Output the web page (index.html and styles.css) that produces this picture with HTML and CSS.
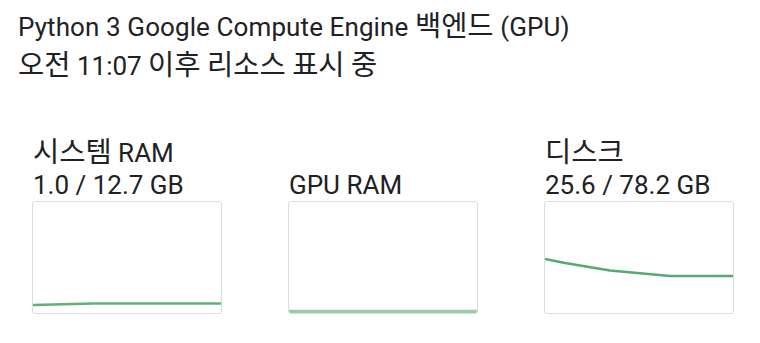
FILE: index.html
```html
<!DOCTYPE html>
<html lang="ko">
<head>
<meta charset="utf-8">
<link rel="stylesheet" href="styles.css">
</head>
<body>
<div class="page">
  <div class="header">
    <div class="title">Python 3 Google Compute Engine <span class="ko">백엔드</span> (GPU)</div>
    <div class="subtitle"><span class="ko">오전</span> 11:07 <span class="ko">이후</span> <span class="ko">리소스</span> <span class="ko">표시</span> <span class="ko">중</span></div>
  </div>
  <div class="cards">
    <div class="card">
      <div class="label"><span class="ko">시스템</span> RAM</div>
      <div class="label">1.0 / 12.7 GB</div>
      <div class="chart">
        <svg width="188" height="111" viewBox="0 0 188 111">
          <polyline points="0,103 60,101.5 188,101.5" fill="none" stroke="#1e8e3e" stroke-opacity="0.7" stroke-width="2.5"/>
        </svg>
      </div>
    </div>
    <div class="card">
      <div class="label">GPU RAM</div>
      <div class="chart">
        <svg width="188" height="111" viewBox="0 0 188 111">
          <polyline points="0,109.5 188,109.5" fill="none" stroke="#1e8e3e" stroke-opacity="0.45" stroke-width="3.5"/>
        </svg>
      </div>
    </div>
    <div class="card">
      <div class="label"><span class="ko">디스크</span></div>
      <div class="label">25.6 / 78.2 GB</div>
      <div class="chart">
        <svg width="188" height="111" viewBox="0 0 188 111">
          <polyline points="0,57 20,61 65,68.5 125,74 188,74" fill="none" stroke="#1e8e3e" stroke-opacity="0.75" stroke-width="2.5" stroke-linejoin="round"/>
        </svg>
      </div>
    </div>
  </div>
</div>
</body>
</html>
```

FILE: styles.css
```css
html, body {
  margin: 0;
  padding: 0;
  background: #ffffff;
}
body {
  font-family: Roboto, "Noto Sans CJK KR", sans-serif;
  color: #202124;
}
.page {
  padding: 8px 18px 0 18px;
}
.header {
  display: flex;
  flex-direction: column;
}
.title, .subtitle {
  font-size: 26px;
  line-height: 39px;
  white-space: nowrap;
}
.title {
  letter-spacing: 0.1px;
}
.ko {
  font-family: "Noto Sans CJK KR", sans-serif;
  font-size: 28.5px;
  line-height: 1;
  letter-spacing: 0;
}
.cards {
  display: flex;
  gap: 66px;
  margin-top: 50px;
  padding-left: 14px;
  align-items: flex-end;
}
.card {
  width: 190px;
  display: flex;
  flex-direction: column;
}
.label {
  font-size: 26px;
  line-height: 32px;
  padding-left: 1px;
  white-space: nowrap;
}
.chart {
  margin-top: 0;
  width: 188px;
  height: 111px;
  border: 1px solid #dadce0;
  border-radius: 3px;
  overflow: hidden;
}
.chart svg {
  display: block;
}
```
